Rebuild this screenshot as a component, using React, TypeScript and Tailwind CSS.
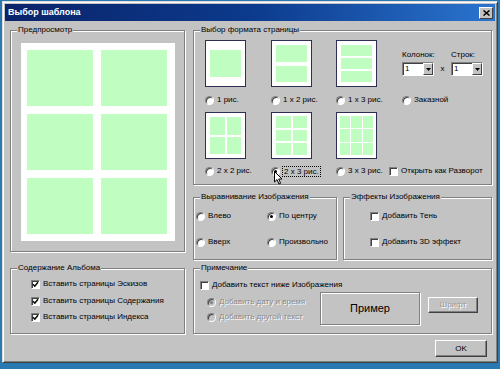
import type { ReactElement, ReactNode } from 'react'

const FONT = "font-['Liberation_Sans',Arial,sans-serif]"

type BoxProps = { label: string; className?: string; children?: ReactNode }

/** Etched classic group box with its caption sitting on the top edge. */
function GroupBox({ label, className = '', children }: BoxProps): ReactElement {
  return (
    <div
      className={`relative border border-[#808080] shadow-[inset_1px_1px_0_#fff,1px_1px_0_#fff] ${className}`}
    >
      <span className="absolute -top-[6px] left-[6px] bg-[#c3c3c3] px-[1px] text-[8px] leading-[10px] text-black">
        {label}
      </span>
      {children}
    </div>
  )
}

function Radio({ checked, disabled }: { checked?: boolean; disabled?: boolean }): ReactElement {
  return (
    <span
      className={`inline-flex h-[9px] w-[9px] shrink-0 items-center justify-center rounded-full border border-b-white border-l-[#808080] border-r-white border-t-[#808080] shadow-[inset_1px_1px_0_#404040] ${
        disabled ? 'bg-[#c3c3c3]' : 'bg-white'
      }`}
    >
      {checked ? (
        <span className={`h-[3px] w-[3px] rounded-full ${disabled ? 'bg-[#808080]' : 'bg-black'}`} />
      ) : null}
    </span>
  )
}

function Check({ checked }: { checked?: boolean }): ReactElement {
  return (
    <span className="inline-flex h-[9px] w-[9px] shrink-0 items-center justify-center border border-b-white border-l-[#808080] border-r-white border-t-[#808080] bg-white shadow-[inset_1px_1px_0_#404040]">
      {checked ? (
        <svg width="7" height="7" viewBox="0 0 7 7" aria-hidden="true">
          <path d="M1 3.3 L2.8 5.2 L6 1.3" fill="none" stroke="#000" strokeWidth="1.4" />
        </svg>
      ) : null}
    </span>
  )
}

type OptProps = { label: string; checked?: boolean; disabled?: boolean; box?: boolean; className?: string }

function Option({ label, checked, disabled, box, className = '' }: OptProps): ReactElement {
  return (
    <div className={`flex h-[10px] items-center gap-[3px] text-[8px] leading-[10px] ${className}`}>
      {box ? <Check checked={checked} /> : <Radio checked={checked} disabled={disabled} />}
      <span
        className={`whitespace-nowrap ${disabled ? 'text-[#8a8a8a] [text-shadow:1px_1px_0_#fff]' : 'text-black'}`}
      >
        {label}
      </span>
    </div>
  )
}

type Layout = '1' | '1x2' | '1x3' | '2x2' | '2x3' | '3x3'

const thumbInner: Record<Layout, { wrap: string; count: number }> = {
  '1': { wrap: 'flex flex-col px-[4px] py-[9px]', count: 1 },
  '1x2': { wrap: 'flex flex-col gap-[4px] px-[4px] py-[4px]', count: 2 },
  '1x3': { wrap: 'flex flex-col gap-[2px] px-[4px] py-[4px]', count: 3 },
  '2x2': { wrap: 'grid grid-cols-2 grid-rows-2 gap-[2px] px-[4px] py-[4px]', count: 4 },
  '2x3': { wrap: 'grid grid-cols-2 grid-rows-3 gap-[2px] px-[4px] py-[3px]', count: 6 },
  '3x3': { wrap: 'grid grid-cols-3 grid-rows-3 gap-[1px] px-[3px] py-[3px]', count: 9 }
}

function Thumb({ layout }: { layout: Layout }): ReactElement {
  const { wrap, count } = thumbInner[layout]
  return (
    <div className={`h-[47px] w-[41px] border border-[#2e2e52] bg-white ${wrap}`}>
      {Array.from({ length: count }).map((_, i) => (
        <div key={i} className="min-h-0 flex-1 bg-[#c0fdc0]" />
      ))}
    </div>
  )
}

function Select(): ReactElement {
  return (
    <div className="flex h-[14px] w-[32px] items-stretch border border-b-white border-l-[#808080] border-r-white border-t-[#808080] bg-white shadow-[inset_1px_1px_0_#404040]">
      <span className="flex-1 pl-[2px] pt-[1px] text-[8px] leading-[10px]">1</span>
      <span className="flex w-[10px] items-center justify-center border border-b-[#404040] border-l-white border-r-[#404040] border-t-white bg-[#c3c3c3]">
        <svg width="5" height="3" viewBox="0 0 5 3" aria-hidden="true">
          <path d="M0 0 H5 L2.5 3 Z" fill="#000" />
        </svg>
      </span>
    </div>
  )
}

function Cursor(): ReactElement {
  return (
    <svg
      className="absolute left-[3px] top-[5px]"
      width="9"
      height="14"
      viewBox="0 0 9 14"
      aria-hidden="true"
    >
      <path d="M0.5 0.5 V11 L3 8.6 L5 13 L6.6 12.3 L4.7 8 H8 Z" fill="#fff" stroke="#000" strokeWidth="1" />
    </svg>
  )
}

export default function App(): ReactElement {
  return (
    <div className={`h-[369px] w-[500px] overflow-hidden bg-[#2a79b3] pl-[2px] pt-[1px] ${FONT}`}>
      <div className="flex h-[362px] w-[496px] flex-col border border-b-[#404040] border-l-[#dcdcdc] border-r-[#404040] border-t-[#dcdcdc] bg-[#c3c3c3] p-[2px] shadow-[inset_1px_1px_0_#fff,inset_-1px_-1px_0_#808080]">
        {/* title bar */}
        <div className="flex h-[17px] shrink-0 items-center justify-between bg-gradient-to-r from-[#0a246a] via-[#0c3a8c] to-[#2b74cf] pl-[3px] pr-[2px]">
          <span className="text-[9px] font-bold leading-[11px] text-white">Выбор шаблона</span>
          <span className="flex h-[12px] w-[14px] items-center justify-center border border-b-[#404040] border-l-white border-r-[#404040] border-t-white bg-[#c3c3c3]">
            <svg width="7" height="6" viewBox="0 0 7 6" aria-hidden="true">
              <path d="M0.5 0.5 L6.5 5.5 M6.5 0.5 L0.5 5.5" stroke="#000" strokeWidth="1.5" />
            </svg>
          </span>
        </div>

        {/* body */}
        <div className="mt-[9px] flex gap-[8px] pl-[5px] pr-[3px]">
          {/* left column */}
          <div className="flex w-[175px] flex-col">
            <GroupBox label="Предпросмотр" className="h-[222px] pl-[10px] pt-[12px]">
              <div className="grid h-[198px] w-[154px] grid-cols-2 grid-rows-3 gap-[8px] bg-white pb-[7px] pl-[6px] pr-[8px] pt-[7px]">
                {Array.from({ length: 6 }).map((_, i) => (
                  <div key={i} className="bg-[#c0fdc0]" />
                ))}
              </div>
            </GroupBox>
            <GroupBox label="Содержание Альбома" className="mt-[16px] flex h-[66px] flex-col gap-[6px] pl-[20px] pt-[10px]">
              <Option box checked label="Вставить страницы Эскизов" />
              <Option box checked label="Вставить страницы Содержания" className="mt-[1px]" />
              <Option box checked label="Вставить страницы Индекса" />
            </GroupBox>
          </div>

          {/* right column */}
          <div className="flex w-[299px] flex-col">
            <GroupBox label="Выбор формата страницы" className="h-[155px] pl-[11px] pt-[9px]">
              <div className="flex">
                <div className="flex w-[66px] flex-col">
                  <Thumb layout="1" />
                  <Option label="1 рис." className="mt-[8px]" />
                </div>
                <div className="flex w-[65px] flex-col">
                  <Thumb layout="1x2" />
                  <Option label="1 x 2 рис." className="mt-[8px]" />
                </div>
                <div className="flex w-[66px] flex-col">
                  <Thumb layout="1x3" />
                  <Option label="1 x 3 рис." className="mt-[8px]" />
                </div>
                <div className="flex flex-col pt-[10px]">
                  <div className="flex text-[8px] leading-[10px]">
                    <span className="w-[49px]">Колонок:</span>
                    <span>Строк:</span>
                  </div>
                  <div className="mt-[2px] flex items-center">
                    <Select />
                    <span className="w-[17px] text-center text-[8px] leading-[10px]">x</span>
                    <Select />
                  </div>
                  <Option label="Заказной" className="mt-[19px]" />
                </div>
              </div>
              <div className="mt-[7px] flex">
                <div className="flex w-[66px] flex-col">
                  <Thumb layout="2x2" />
                  <Option label="2 x 2 рис." className="mt-[7px]" />
                </div>
                <div className="flex w-[65px] flex-col">
                  <Thumb layout="2x3" />
                  <div className="relative mt-[7px] flex h-[10px] items-center gap-[2px] text-[8px] leading-[10px]">
                    <Radio checked />
                    <span className="whitespace-nowrap border border-dotted border-black px-[1px] leading-[9px]">
                      2 x 3 рис.
                    </span>
                    <Cursor />
                  </div>
                </div>
                <div className="flex w-[53px] flex-col">
                  <Thumb layout="3x3" />
                  <Option label="3 x 3 рис." className="mt-[7px]" />
                </div>
                <div className="flex flex-col justify-end">
                  <Option box label="Открыть как Разворот" />
                </div>
              </div>
            </GroupBox>

            <div className="mt-[12px] flex h-[63px] gap-[6px]">
              <GroupBox label="Выравнивание Изображения" className="grid w-[144px] grid-cols-[71px_1fr] grid-rows-[10px_10px] gap-y-[16px] pl-[2px] pt-[13px]">
                <Option label="Влево" />
                <Option label="По центру" checked />
                <Option label="Вверх" />
                <Option label="Произвольно" />
              </GroupBox>
              <GroupBox label="Эффекты Изображения" className="flex flex-1 flex-col gap-[16px] pl-[26px] pt-[13px]">
                <Option box label="Добавить Тень" />
                <Option box label="Добавить 3D эффект" />
              </GroupBox>
            </div>

            <GroupBox label="Примечание" className="mt-[8px] h-[66px] pt-[11px]">
              <Option box label="Добавить текст ниже Изображения" className="pl-[6px]" />
              <div className="mt-[2px] flex items-start pl-[13px]">
                <div className="flex w-[113px] flex-col gap-[5px] pt-[5px]">
                  <Option disabled checked label="Добавить дату и время" />
                  <Option disabled label="Добавить другой текст" />
                </div>
                <div className="flex h-[33px] w-[100px] items-center justify-center border border-[#808080] text-[11px] text-black shadow-[inset_1px_1px_0_#fff,1px_1px_0_#fff]">
                  Пример
                </div>
                <div className="ml-[8px] mt-[5px] flex h-[16px] w-[50px] items-center justify-center border border-b-[#404040] border-l-white border-r-[#404040] border-t-white text-[8px] text-[#9a9a9a] shadow-[inset_-1px_-1px_0_#808080] [text-shadow:1px_1px_0_#fff]">
                  Шрифт
                </div>
              </div>
            </GroupBox>
          </div>
        </div>

        {/* footer */}
        <div className="mt-[6px] flex justify-end pr-[8px]">
          <button className="flex h-[17px] w-[52px] items-center justify-center border border-b-[#404040] border-l-white border-r-[#404040] border-t-white bg-[#c3c3c3] text-[8px] text-black shadow-[inset_-1px_-1px_0_#808080]">
            OK
          </button>
        </div>
      </div>
    </div>
  )
}
